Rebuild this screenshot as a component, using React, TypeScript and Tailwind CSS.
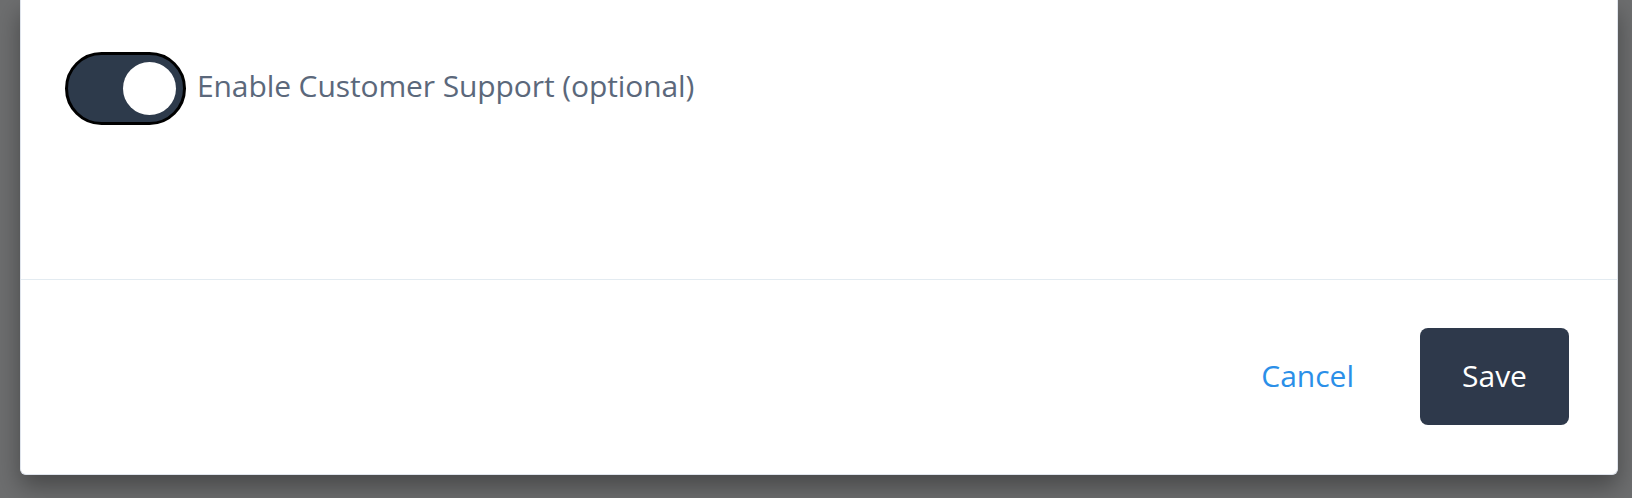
import React from "react";

export default function App() {
  return (
    <div
      className="w-[1632px] h-[498px] overflow-hidden bg-[#6d6e6f] flex flex-col"
      style={{ fontFamily: '"Open Sans", "Noto Sans", sans-serif' }}
    >
      <div className="ml-[20px] w-[1598px] h-[475px] bg-white border-x border-b border-[#dfe4ec] rounded-b-[6px] shadow-[0_12px_24px_rgba(0,0,0,0.35)] flex flex-col">
        <div className="h-[279px] pt-[52px] pl-[44px]">
          <div className="flex items-center gap-[11px]">
            <button
              type="button"
              className="w-[121px] h-[73px] rounded-full bg-[#2d3a4b] border-[3px] border-black flex items-center justify-end pr-[7px]"
            >
              <span className="block w-[53px] h-[53px] rounded-full bg-white" />
            </button>
            <span className="text-[30px] leading-[40px] tracking-[-0.1px] text-[#5b687b] pb-[5px]">
              Enable Customer Support (optional)
            </span>
          </div>
        </div>
        <div className="h-px bg-[#e3ebf1]" />
        <div className="flex-1 flex items-center justify-end pr-[48px] pb-[2px]">
          <button type="button" className="text-[30px] leading-[40px] text-[#2b8fe8] mr-[66px]">
            Cancel
          </button>
          <button
            type="button"
            className="w-[149px] h-[97px] rounded-[8px] bg-[#2e394b] text-white text-[30px] leading-[40px]"
          >
            Save
          </button>
        </div>
      </div>
    </div>
  );
}
